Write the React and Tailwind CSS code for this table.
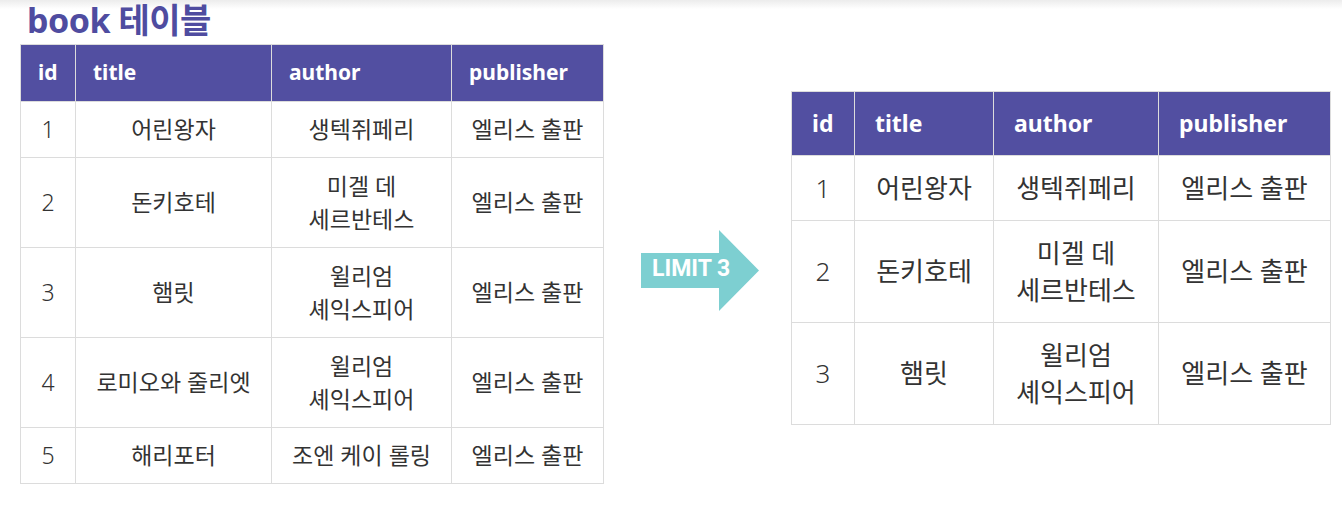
import React from "react";

const rows = [
  { id: 1, title: "어린왕자", author: ["생텍쥐페리"], pub: "엘리스 출판" },
  { id: 2, title: "돈키호테", author: ["미겔 데", "세르반테스"], pub: "엘리스 출판" },
  { id: 3, title: "햄릿", author: ["윌리엄", "셰익스피어"], pub: "엘리스 출판" },
  { id: 4, title: "로미오와 줄리엣", author: ["윌리엄", "셰익스피어"], pub: "엘리스 출판" },
  { id: 5, title: "해리포터", author: ["조엔 케이 롤링"], pub: "엘리스 출판" },
];

const font = { fontFamily: '"Noto Sans", "Noto Sans CJK KR", sans-serif' };

function BookTable({ data, big }) {
  const cols = big ? [63, 139, 165, 172] : [55, 196, 180, 152];
  const th = big
    ? "border border-[#dcdcdc] text-left text-white font-bold text-[23px] px-[20px] h-[64px]"
    : "border border-[#dcdcdc] text-left text-white font-bold text-[21px] px-[17px] h-[57px]";
  const td = big
    ? "border border-[#dcdcdc] text-center text-[#333] text-[26px] leading-[37px] px-0"
    : "border border-[#dcdcdc] text-center text-[#333] text-[23px] leading-[33px] px-0";
  return (
    <table className="border-collapse table-fixed" style={font}>
      <colgroup>
        {cols.map((w, i) => (
          <col key={i} style={{ width: w }} />
        ))}
      </colgroup>
      <thead>
        <tr className="bg-[#524fa1]">
          <th className={th}>id</th>
          <th className={th}>title</th>
          <th className={th}>author</th>
          <th className={th}>publisher</th>
        </tr>
      </thead>
      <tbody>
        {data.map((r) => {
          const two = r.author.length > 1;
          const h = big ? (two ? "h-[102px]" : "h-[65px]") : two ? "h-[90px]" : "h-[56px]";
          return (
            <tr key={r.id} className={h}>
              <td className={td + " font-light"}>{r.id}</td>
              <td className={td}>{r.title}</td>
              <td className={td}>
                {r.author.map((a, i) => (
                  <div key={i}>{a}</div>
                ))}
              </td>
              <td className={td}>{r.pub}</td>
            </tr>
          );
        })}
      </tbody>
    </table>
  );
}

export default function App() {
  return (
    <div className="w-[1342px] h-[507px] bg-white bg-[linear-gradient(to_bottom,#ececec_0px,#ffffff_9px)] overflow-hidden">
      <div className="flex items-start pl-[20px]">
        <div className="flex flex-col">
          <div
            className="h-[44px] pl-[7px] text-[34px] leading-[40px] font-bold text-[#4f4ca0] tracking-[-0.5px] whitespace-nowrap"
            style={font}
          >
            book 테이블
          </div>
          <BookTable data={rows} />
        </div>
        <div className="relative ml-[37px] mt-[230px] w-[118px] h-[81px]">
          <svg className="absolute inset-0" width="118" height="81" viewBox="0 0 118 81">
            <polygon points="0,23 78,23 78,0 118,40.5 78,81 78,58 0,58" fill="#7dcfd1" />
          </svg>
          <span
            className="absolute left-[11px] top-[25px] text-white font-bold text-[23px] leading-[28px] whitespace-nowrap"
            style={{ fontFamily: "Roboto, sans-serif" }}
          >
            LIMIT 3
          </span>
        </div>
        <div className="ml-[32px] mt-[91px]">
          <BookTable data={rows.slice(0, 3)} big />
        </div>
      </div>
    </div>
  );
}
